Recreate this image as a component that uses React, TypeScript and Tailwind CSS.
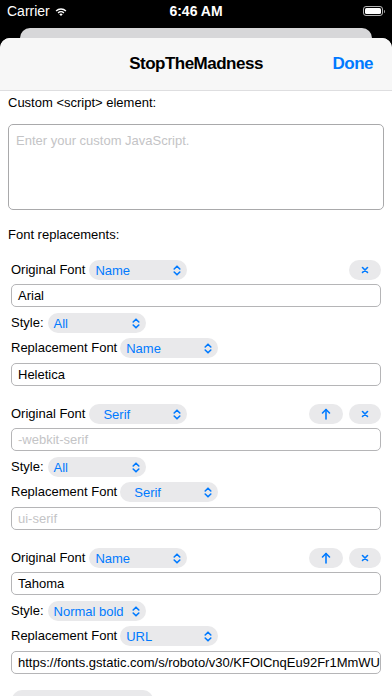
import React from "react";

const BLUE = "text-[#007aff]";

function UpDown() {
  return (
    <svg width="8" height="11" viewBox="0 0 8 11" fill="none" stroke="#007aff" strokeWidth="1.6" strokeLinecap="round" strokeLinejoin="round">
      <path d="M1.2 4 L4 1.2 L6.8 4" />
      <path d="M1.2 7 L4 9.8 L6.8 7" />
    </svg>
  );
}

function Cross() {
  return (
    <svg width="8" height="8" viewBox="0 0 8 8" fill="none" stroke="#007aff" strokeWidth="1.6" strokeLinecap="round">
      <path d="M1.5 1.5 L6.5 6.5 M6.5 1.5 L1.5 6.5" />
    </svg>
  );
}

function ArrowUp() {
  return (
    <svg width="10" height="12" viewBox="0 0 10 12" fill="none" stroke="#007aff" strokeWidth="1.6" strokeLinecap="round" strokeLinejoin="round">
      <path d="M5 1.5 V11" />
      <path d="M1.5 5 L5 1.5 L8.5 5" />
    </svg>
  );
}

function Select({ value, width, indent = 0 }: { value: string; width: string; indent?: number }) {
  return (
    <div className={`${width} h-[20px] rounded-full bg-[#e9e9eb] flex items-center justify-between pl-[6px] pr-[6px]`}>
      <span className={`${BLUE} text-[13px] leading-none`} style={{ marginLeft: indent }}>
        {value}
      </span>
      <UpDown />
    </div>
  );
}

function Field({ value, placeholder }: { value?: string; placeholder?: string }) {
  return (
    <div className="h-[23px] rounded-[5px] border border-[#b5b5b7] flex items-center px-[6px] overflow-hidden">
      {value ? (
        <span className="text-[13px] text-black whitespace-nowrap">{value}</span>
      ) : (
        <span className="text-[13px] text-[#c4c4c6] whitespace-nowrap">{placeholder}</span>
      )}
    </div>
  );
}

interface Replacement {
  kind: string;
  kindIndent?: number;
  original?: string;
  originalPlaceholder?: string;
  style: string;
  replKind: string;
  replIndent?: number;
  repl?: string;
  replPlaceholder?: string;
  canMoveUp: boolean;
}

const replacements: Replacement[] = [
  { kind: "Name", original: "Arial", style: "All", replKind: "Name", repl: "Heletica", canMoveUp: false },
  {
    kind: "Serif",
    kindIndent: 8,
    originalPlaceholder: "-webkit-serif",
    style: "All",
    replKind: "Serif",
    replIndent: 8,
    replPlaceholder: "ui-serif",
    canMoveUp: true,
  },
  {
    kind: "Name",
    original: "Tahoma",
    style: "Normal bold",
    replKind: "URL",
    repl: "https://fonts.gstatic.com/s/roboto/v30/KFOlCnqEu92Fr1MmWUlfBBc4.woff2",
    canMoveUp: true,
  },
];

function ReplacementGroup({ r }: { r: Replacement }) {
  return (
    <div className="flex flex-col mx-[3px] mb-[18px]">
      <div className="flex items-center h-[20px]">
        <span className="text-[13px] text-black mr-[4px]">Original Font</span>
        <Select value={r.kind} width="w-[98px]" indent={r.kindIndent} />
        <div className="flex-1" />
        {r.canMoveUp && (
          <div className="w-[34px] h-[20px] rounded-full bg-[#e9e9eb] flex items-center justify-center mr-[6px]">
            <ArrowUp />
          </div>
        )}
        <div className="w-[32px] h-[20px] rounded-full bg-[#e9e9eb] flex items-center justify-center">
          <Cross />
        </div>
      </div>
      <div className="mt-[4px]">
        <Field value={r.original} placeholder={r.originalPlaceholder} />
      </div>
      <div className="flex items-center h-[20px] mt-[6px]">
        <span className="text-[13px] text-black mr-[4px]">Style:</span>
        <Select value={r.style} width="w-[98px]" />
      </div>
      <div className="flex items-center h-[20px] mt-[5px]">
        <span className="text-[13px] text-black mr-[3px]">Replacement Font</span>
        <Select value={r.replKind} width="w-[98px]" indent={r.replIndent} />
      </div>
      <div className="mt-[5px]">
        <Field value={r.repl} placeholder={r.replPlaceholder} />
      </div>
    </div>
  );
}

export default function App() {
  return (
    <div
      className="w-[392px] h-[696px] overflow-hidden bg-black flex flex-col"
      style={{ fontFamily: '"Liberation Sans", Arial, sans-serif' }}
    >
      {/* Status bar */}
      <div className="h-[28px] shrink-0 relative flex items-center px-[7px] text-white">
        <span className="text-[14px] leading-none mt-[-6px]">Carrier</span>
        <svg className="ml-[5px] mt-[-6px]" width="12" height="9" viewBox="0 0 12 9" fill="white">
          <path d="M6 9 L4.3 7.2 A2.5 2.5 0 0 1 7.7 7.2 Z" />
          <path d="M2.6 5.5 A4.8 4.8 0 0 1 9.4 5.5 L8.4 6.5 A3.4 3.4 0 0 0 3.6 6.5 Z" />
          <path d="M0.6 3.5 A7.6 7.6 0 0 1 11.4 3.5 L10.4 4.5 A6.2 6.2 0 0 0 1.6 4.5 Z" />
        </svg>
        <span className="absolute left-0 right-0 top-[4px] text-center text-[14px] font-bold leading-none">6:46 AM</span>
        <div className="flex-1" />
        <div className="flex items-center mt-[-6px] mr-0">
          <div className="w-[20px] h-[10px] rounded-[3px] border border-white/70 p-[1px]">
            <div className="w-full h-full bg-white rounded-[1.5px]" />
          </div>
          <div className="w-[1.5px] h-[3px] bg-white/60 ml-[1px] rounded-r" />
        </div>
      </div>

      {/* Card behind */}
      <div className="h-[10px] shrink-0 mx-[20px] bg-[#d7d7d9] rounded-t-[10px]" />

      {/* Sheet */}
      <div className="flex-1 bg-white rounded-t-[10px] overflow-hidden flex flex-col">
        <div className="h-[53px] shrink-0 bg-[#f7f7f7] border-b border-[#dedee0] relative flex items-center justify-center">
          <span className="text-[17px] font-bold text-black tracking-[-0.5px]">StopTheMadness</span>
          <span className={`absolute right-[19px] text-[17px] font-bold ${BLUE} tracking-[-0.5px]`}>Done</span>
        </div>

        <div className="px-[8px] pt-[4px] flex flex-col">
          <div className="text-[13px] leading-[16px] text-black">Custom &lt;script&gt; element:</div>
          <div className="mt-[13px] h-[86px] rounded-[5px] border border-[#a9a9ab] px-[7px] pt-[3px]">
            <span className="text-[13px] leading-[16px] text-[#c4c4c6]">Enter your custom JavaScript.</span>
          </div>
          <div className="mt-[17px] text-[13px] leading-[16px] text-black">Font replacements:</div>
          <div className="mt-[17px] flex flex-col">
            {replacements.map((r, i) => (
              <ReplacementGroup key={i} r={r} />
            ))}
          </div>
          <div className="mx-[4px] -mt-[2px] w-[141px] h-[20px] rounded-full bg-[#e9e9eb]" />
        </div>
      </div>
    </div>
  );
}
